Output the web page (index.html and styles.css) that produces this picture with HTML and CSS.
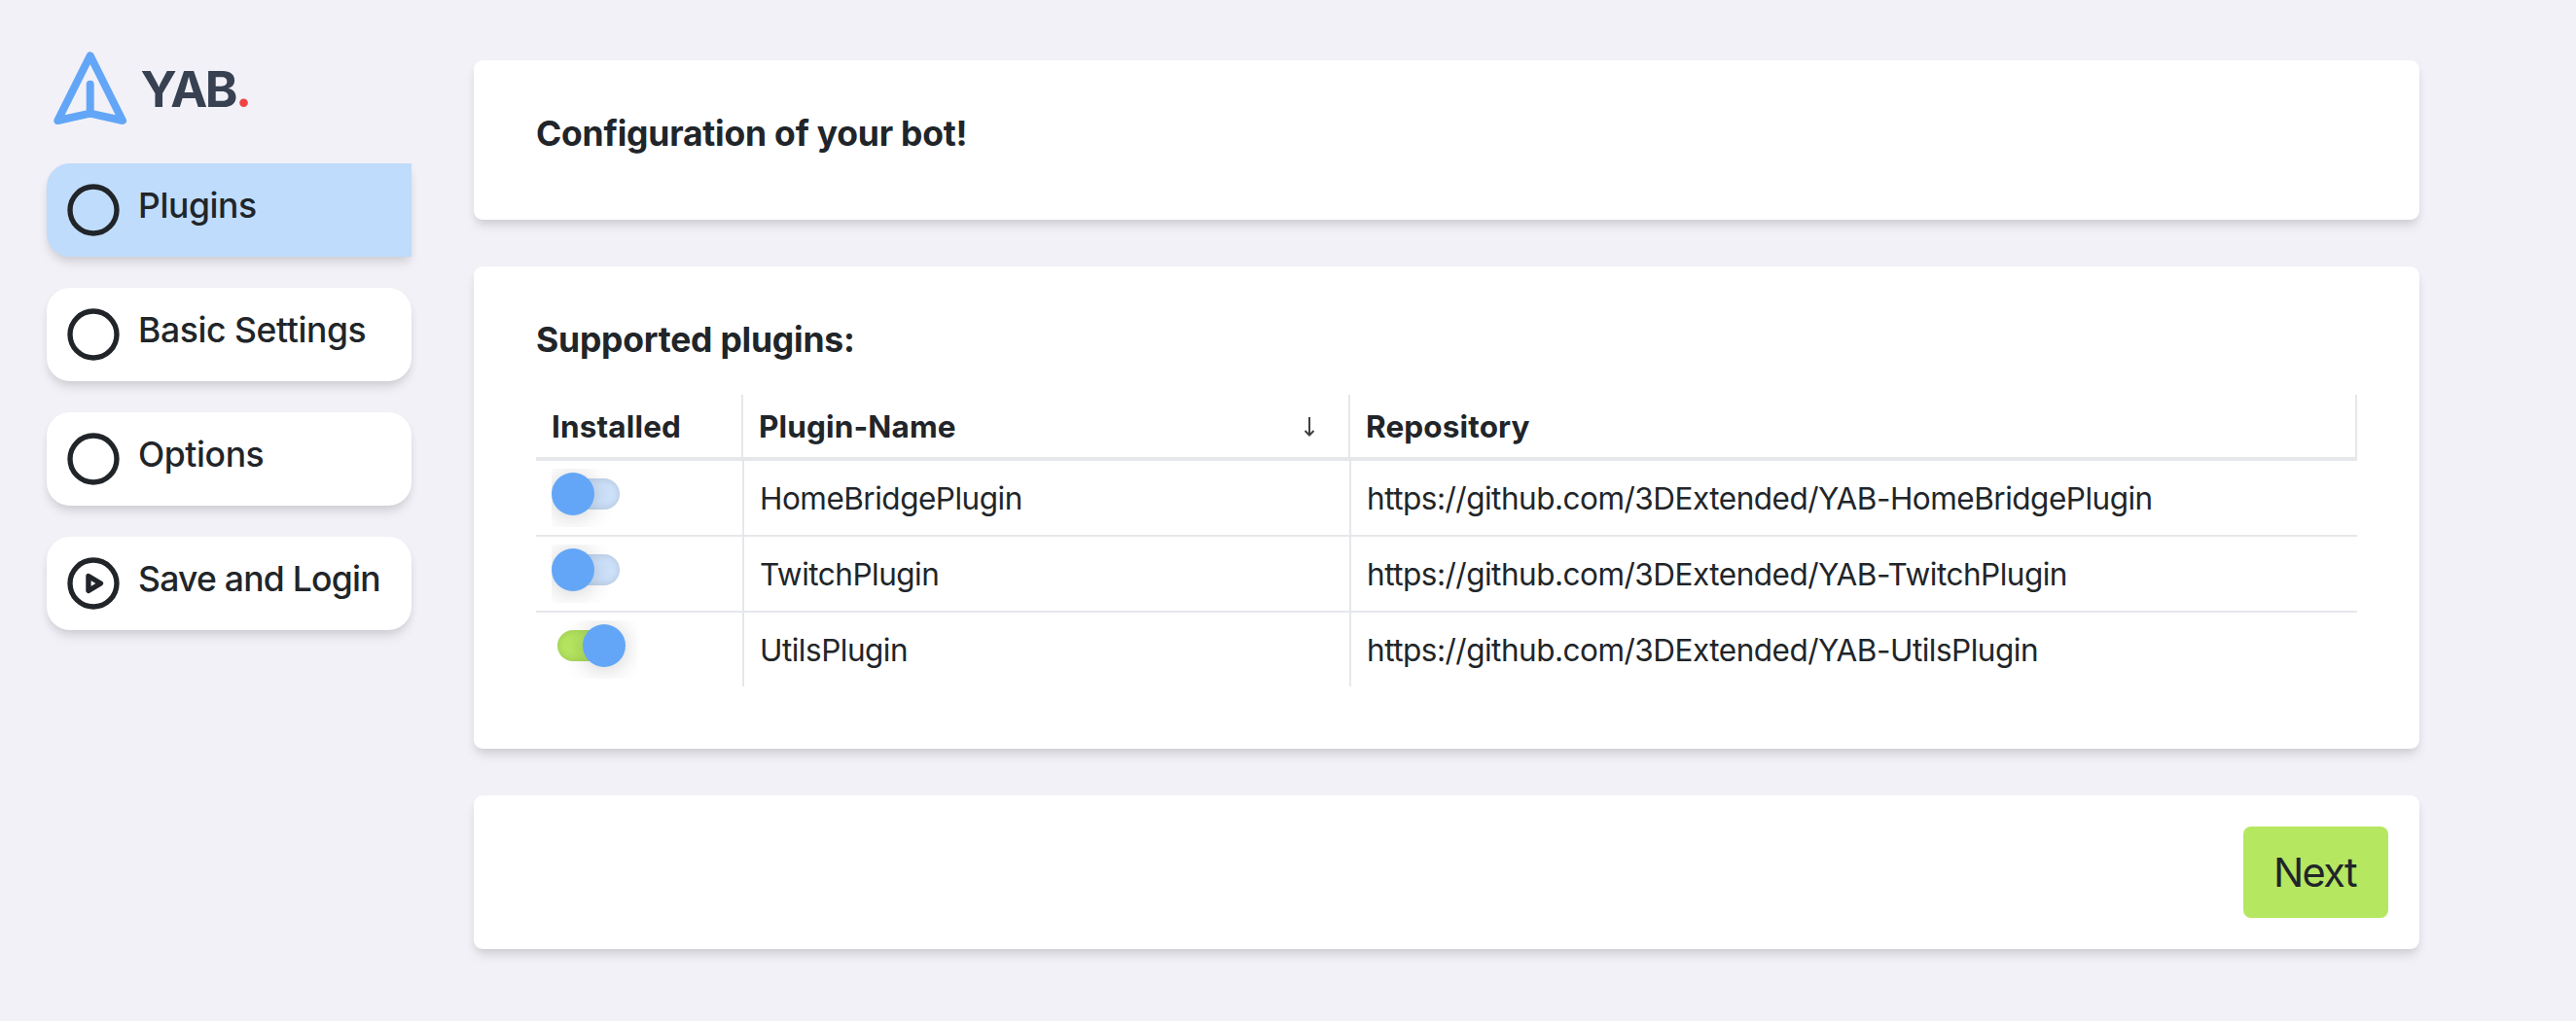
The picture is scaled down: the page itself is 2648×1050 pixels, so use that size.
FILE: index.html
```html
<!DOCTYPE html>
<html lang="en">
<head>
<meta charset="utf-8">
<title>YAB</title>
<link rel="stylesheet" href="styles.css">
</head>
<body>
<div class="app">
  <aside class="sidebar">
    <div class="brand">
      <svg class="brand-icon" viewBox="0 0 96 96"><path d="M48.7 15.3L82 82L48.7 74.7L15.3 82Z"/><path d="M48.7 74.7V44.7"/></svg>
      <span class="brand-name">YAB<span class="brand-dot">.</span></span>
    </div>
    <nav class="steps">
      <a class="step step-active"><svg class="step-icon" viewBox="0 0 24 24"><circle cx="12" cy="12" r="9"/></svg><span class="step-label">Plugins</span></a>
      <a class="step"><svg class="step-icon" viewBox="0 0 24 24"><circle cx="12" cy="12" r="9"/></svg><span class="step-label">Basic Settings</span></a>
      <a class="step"><svg class="step-icon" viewBox="0 0 24 24"><circle cx="12" cy="12" r="9"/></svg><span class="step-label">Options</span></a>
      <a class="step"><svg class="step-icon" viewBox="0 0 24 24"><circle cx="12" cy="12" r="9"/><path d="M10.1 9.2l4.7 2.8l-4.7 2.8z"/></svg><span class="step-label step-label-tight">Save and Login</span></a>
    </nav>
  </aside>
  <main class="content">
    <section class="card card-title"><h1 class="heading">Configuration of your bot!</h1></section>
    <section class="card card-plugins">
      <h2 class="heading">Supported plugins:</h2>
      <div class="table">
        <div class="row row-head">
          <div class="cell">Installed</div>
          <div class="cell cell-sorted">Plugin-Name<svg class="sort-icon" viewBox="0 0 12 22"><path d="M6 1v19M1.5 15l4.5 4.5l4.5-4.5"/></svg></div>
          <div class="cell">Repository</div>
        </div>
        <div class="row">
          <div class="cell"><span class="switch"><span class="track"><span class="knob"></span></span></span></div>
          <div class="cell">HomeBridgePlugin</div>
          <div class="cell">https://github.com/3DExtended/YAB-HomeBridgePlugin</div>
        </div>
        <div class="row">
          <div class="cell"><span class="switch"><span class="track"><span class="knob"></span></span></span></div>
          <div class="cell">TwitchPlugin</div>
          <div class="cell">https://github.com/3DExtended/YAB-TwitchPlugin</div>
        </div>
        <div class="row">
          <div class="cell"><span class="switch switch-on"><span class="track"><span class="knob"></span></span></span></div>
          <div class="cell">UtilsPlugin</div>
          <div class="cell">https://github.com/3DExtended/YAB-UtilsPlugin</div>
        </div>
      </div>
    </section>
    <section class="card card-actions"><button class="next">Next</button></section>
  </main>
</div>
</body>
</html>
```
FILE: styles.css
```css
* { box-sizing: border-box; }

body {
  margin: 0;
  background: #f2f1f7;
  color: #212529;
  font-family: Inter, "Liberation Sans", sans-serif;
}

.app {
  display: flex;
  gap: 64px;
  width: 2648px;
  height: 1050px;
  padding-left: 48px;
}

.sidebar { width: 375px; padding-top: 44px; }

.brand {
  display: flex;
  align-items: center;
  height: 92px;
  margin-bottom: 32px;
}

.brand-icon {
  width: 96px;
  height: 96px;
  margin-left: -4px;
  fill: none;
  stroke: #63a6f7;
  stroke-width: 8;
  stroke-linecap: round;
  stroke-linejoin: round;
}

.brand-name {
  margin: 3px 0 0 4.5px;
  color: #374151;
  font-size: 51px;
  font-weight: 700;
  letter-spacing: -2.5px;
  line-height: 64px;
}

.brand-dot { color: #ef4444; }

.steps { display: flex; flex-direction: column; gap: 32px; }

.step {
  display: flex;
  height: 96px;
  padding: 16px;
  border-radius: 24px;
  background: #fff;
  box-shadow: 0 8px 12px -2px rgba(0, 0, 0, .1), 0 4px 8px -2px rgba(0, 0, 0, .08);
}

.step-active { background: #bfdcfc; border-radius: 24px 0 0 24px; }

.step-icon {
  flex: none;
  width: 64px;
  height: 64px;
  fill: none;
  stroke: #212529;
  stroke-width: 2;
  stroke-linecap: round;
  stroke-linejoin: round;
}

.step-label {
  margin-left: 14px;
  font-size: 35.5px;
  font-weight: 500;
  letter-spacing: -.4px;
  line-height: 56px;
  white-space: nowrap;
}

.step-label-tight { letter-spacing: -.75px; }

.content {
  display: flex;
  flex-direction: column;
  gap: 48px;
  width: 2000px;
  padding-top: 62px;
}

.card {
  border-radius: 9px;
  background: #fff;
  box-shadow: 0 8px 12px -2px rgba(0, 0, 0, .1), 0 4px 8px -2px rgba(0, 0, 0, .08);
}

.card-title { height: 164px; padding: 48px 64px; }
.card-plugins { height: 496px; padding: 48px 64px; }

.heading {
  margin: 0;
  font-size: 35.5px;
  font-weight: 700;
  letter-spacing: -.22px;
  line-height: 56px;
}

.table {
  margin-top: 28px;
  font-size: 31.5px;
  letter-spacing: -.5px;
}

.row {
  display: grid;
  grid-template-columns: 214px 624px 1034px;
  height: 78px;
  border-bottom: 2px solid #e5e7eb;
}

.row:last-child { height: 76px; border-bottom: 0; }

.row-head {
  grid-template-columns: 213px 624px 1035px;
  height: 68px;
  border-bottom: 4px solid #e5e7eb;
  font-weight: 700;
  letter-spacing: .14px;
}

.cell {
  display: flex;
  align-items: center;
  padding: 1px 16px 0;
  border-right: 2px solid #e5e7eb;
  white-space: nowrap;
}

.row:not(.row-head) .cell:last-child { border-right: 0; }

.cell-sorted { justify-content: space-between; }

.sort-icon {
  width: 12px;
  height: 22px;
  margin-right: 18px;
  fill: none;
  stroke: #3c4043;
  stroke-width: 2;
}

/* The switch box clips the knob's shadow. */
.switch {
  width: 88px;
  height: 60px;
  margin-top: -1px;
  padding: 10px 0 0 6px;
  overflow: hidden;
}

.track {
  display: flex;
  align-items: center;
  width: 64px;
  height: 32px;
  border-radius: 16px;
  background: #cfe3fc;
  box-shadow: inset 0 0 8px rgba(0, 0, 0, .15);
}

.knob {
  flex: none;
  width: 44px;
  height: 44px;
  margin-left: -6px;
  border-radius: 50%;
  background: #63a6f7;
  box-shadow: 0 2px 24px rgba(0, 0, 0, .2);
}

.switch-on .track { background: #b6e761; }
.switch-on .knob { margin-left: 26px; }

.card-actions {
  display: flex;
  justify-content: flex-end;
  height: 158px;
  padding: 32px;
}

.next {
  width: 149px;
  height: 94px;
  padding: 0 2px 0 0;
  border: 0;
  border-radius: 8px;
  background: #b6e761;
  color: #212529;
  font: 400 41.5px/94px Inter, "Liberation Sans", sans-serif;
  letter-spacing: -1.6px;
}
```
